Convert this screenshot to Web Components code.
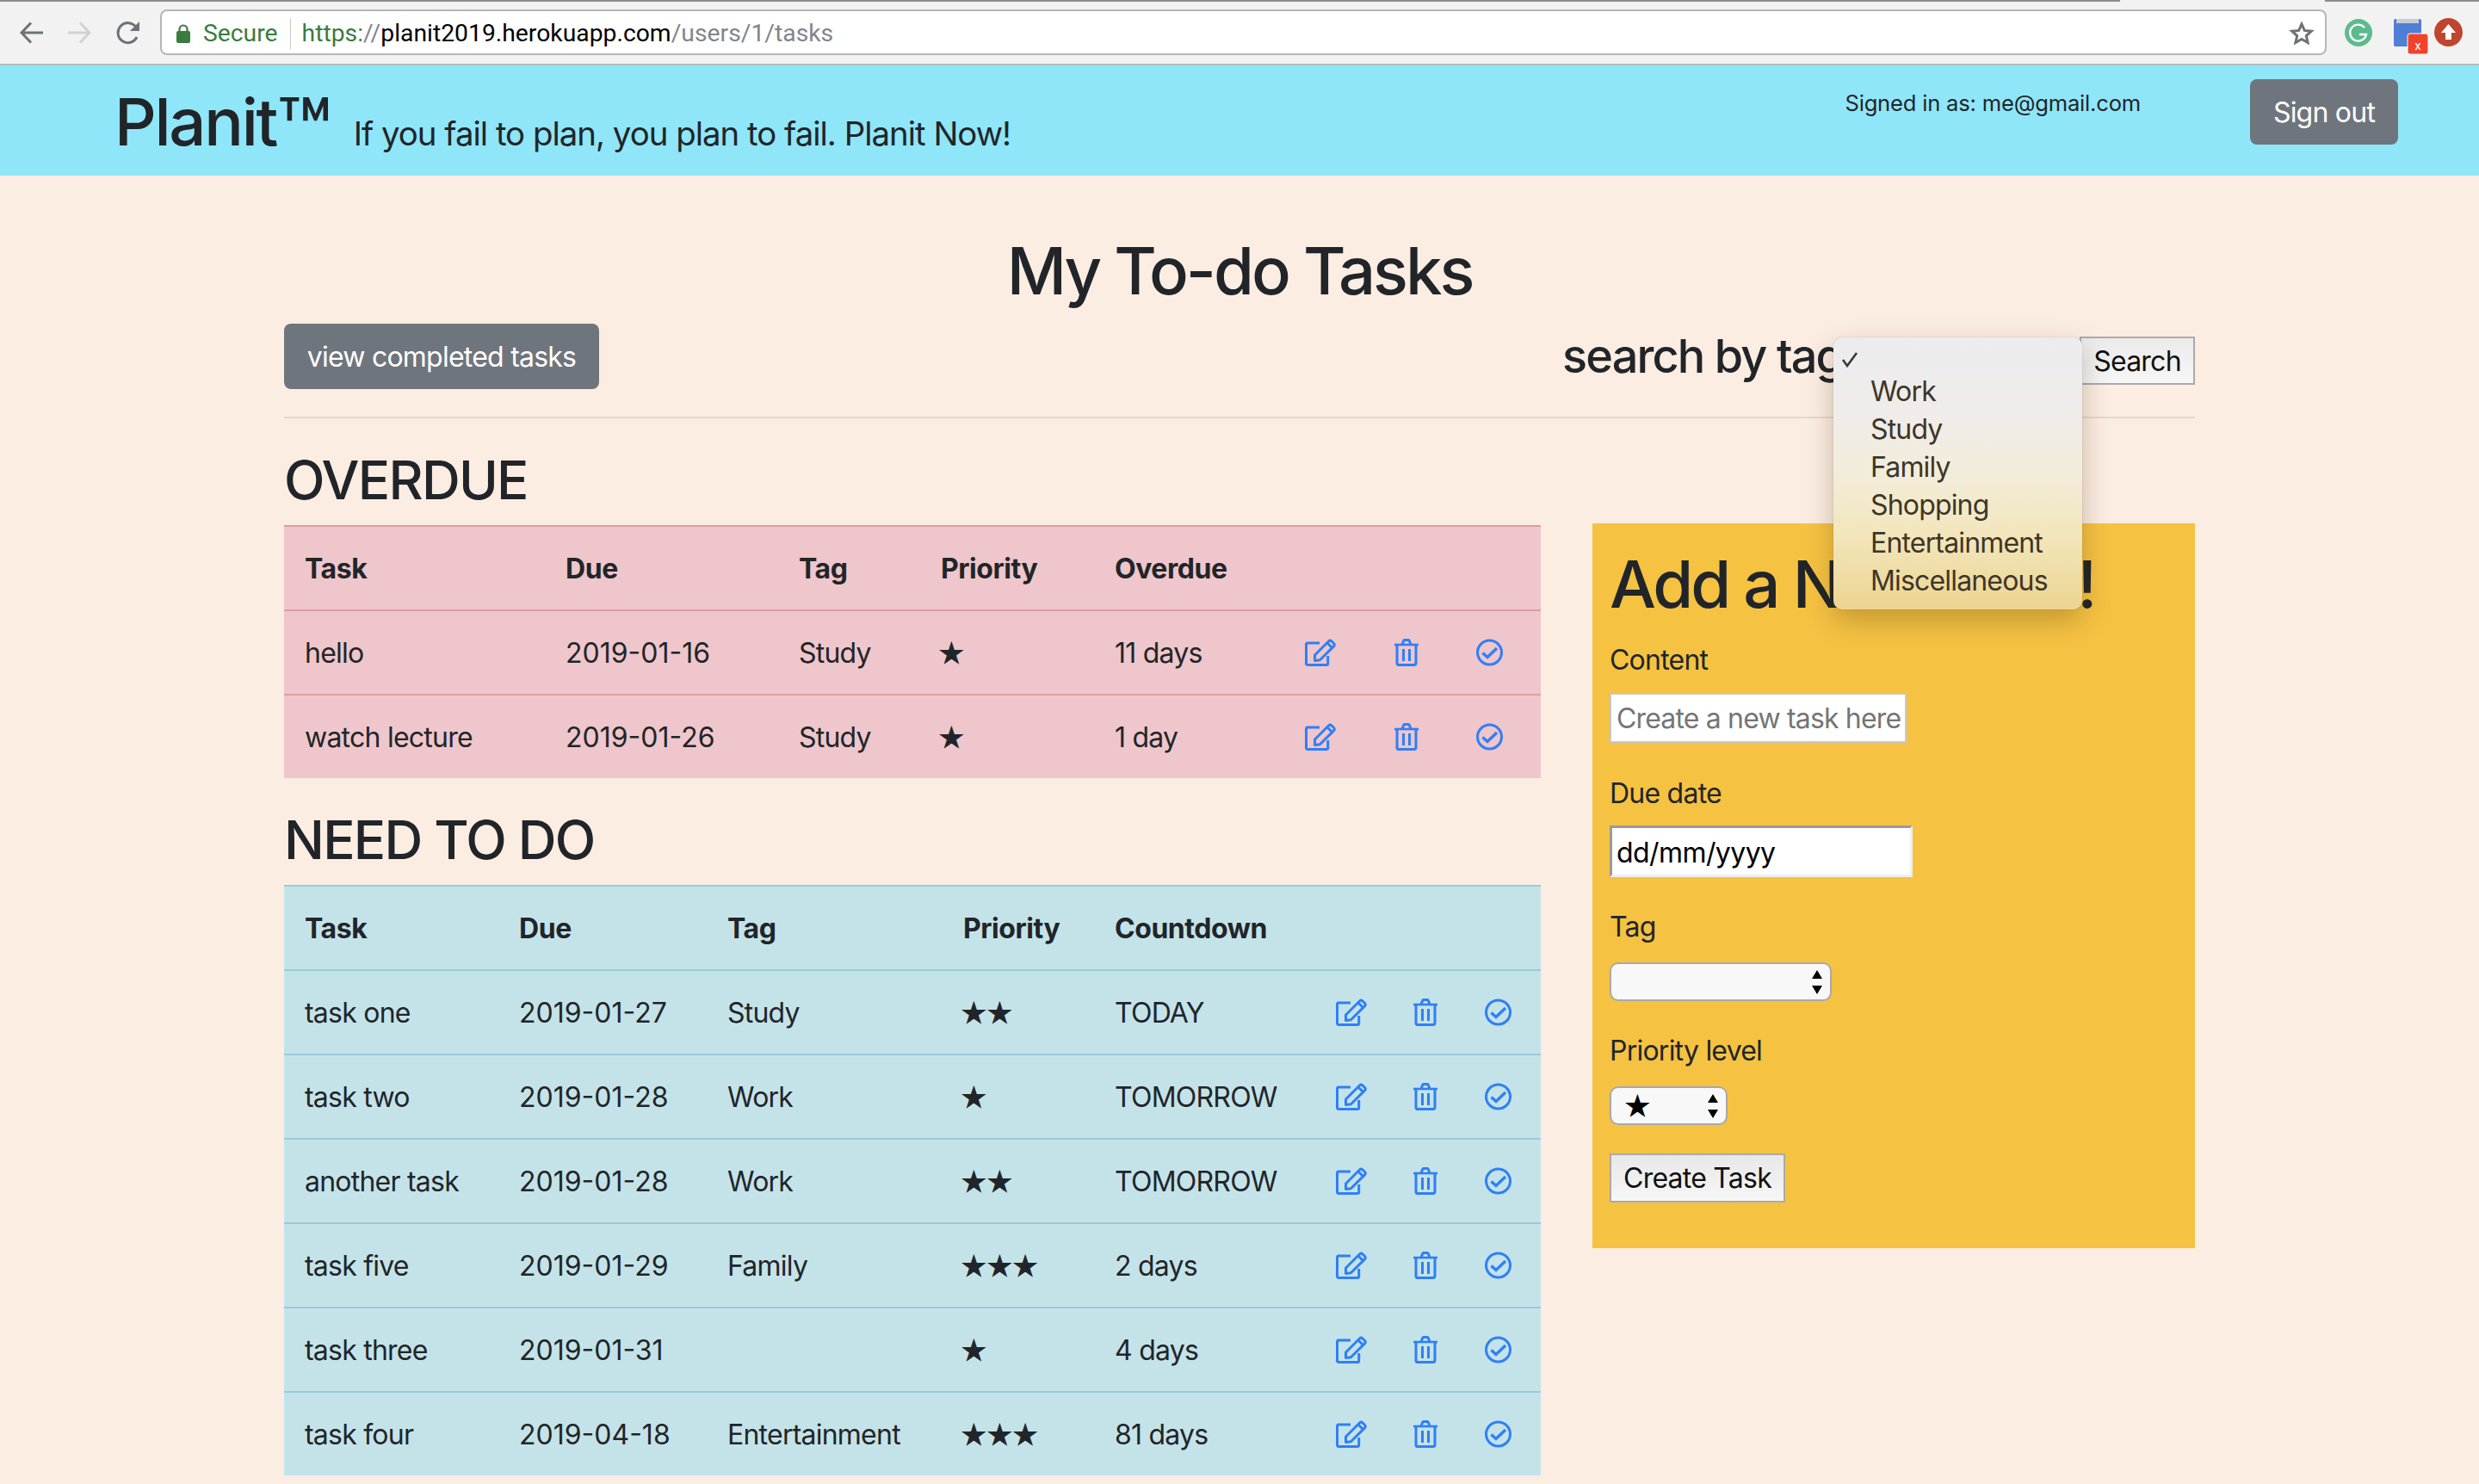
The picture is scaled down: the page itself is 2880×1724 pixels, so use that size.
<!DOCTYPE html>
<html lang="en">
<head>
<meta charset="utf-8">
<title>Planit</title>
<style>
    html, body { margin: 0; padding: 0; background: #fcede2; }
    body { font-family: Inter, "Liberation Sans", sans-serif; font-size: 32px; color: #212529; letter-spacing: -0.024em; }
</style>
</head>
<body>
<browser-bar url-host="planit2019.herokuapp.com" url-path="/users/1/tasks"></browser-bar>
<site-header></site-header>
<task-page>
    <task-toolbar slot="toolbar"></task-toolbar>
    <section-title>OVERDUE</section-title>
    <task-table style="--cols: 303px 271px 165px 202px 221px 104px 95px 99px; --row-bg: #efc6cb; --row-line: #e09ca3;">
        <task-row head task="Task" due="Due" tag="Tag" priority="Priority" left="Overdue"></task-row>
        <task-row task="hello" due="2019-01-16" tag="Study" stars="1" left="11 days"></task-row>
        <task-row task="watch lecture" due="2019-01-26" tag="Study" stars="1" left="1 day"></task-row>
    </task-table>
    <section-title>NEED TO DO</section-title>
    <task-table style="--cols: 249px 242px 274px 176px 257px 90px 83px 89px; --row-bg: #c4e3e9; --row-line: #98cbda;">
        <task-row head task="Task" due="Due" tag="Tag" priority="Priority" left="Countdown"></task-row>
        <task-row task="task one" due="2019-01-27" tag="Study" stars="2" left="TODAY"></task-row>
        <task-row task="task two" due="2019-01-28" tag="Work" stars="1" left="TOMORROW"></task-row>
        <task-row task="another task" due="2019-01-28" tag="Work" stars="2" left="TOMORROW"></task-row>
        <task-row task="task five" due="2019-01-29" tag="Family" stars="3" left="2 days"></task-row>
        <task-row task="task three" due="2019-01-31" tag="" stars="1" left="4 days"></task-row>
        <task-row task="task four" due="2019-04-18" tag="Entertainment" stars="3" left="81 days"></task-row>
    </task-table>
    <add-task-form slot="aside"></add-task-form>
</task-page>

<script>
class BrowserBar extends HTMLElement {
    constructor() {
        super();
        this.attachShadow({ mode: 'open' });
    }

    connectedCallback() {
        const host = this.getAttribute('url-host');
        const path = this.getAttribute('url-path');
        this.shadowRoot.innerHTML = `
            <style>
                :host { display: block; height: 76px; box-sizing: border-box; background: #f2f2f2; border-bottom: 2px solid #b4bcc0; font-family: Roboto, "Liberation Sans", sans-serif; letter-spacing: 0; }
                .tabs { display: flex; height: 2px; margin-bottom: 9px; }
                .tabs i { display: block; background: #8c8c8c; }
                .tabs i:first-child { width: 2463px; }
                .tabs i:last-child { margin-left: 238px; flex: 1; }
                .row { display: flex; align-items: center; height: 53px; padding-left: 23px; }
                .nav { display: block; flex: none; }
                .back { margin-right: 29px; }
                .forward { margin-right: 29px; }
                .reload { margin-right: 23px; }
                .address { display: flex; align-items: center; box-sizing: border-box; width: 2517px; height: 53px; padding-top: 2px; background: #fff; border: 2px solid #b6b6b6; border-radius: 8px; padding-left: 17px; font-size: 28.300px; white-space: nowrap; }
                .secure { color: #3a7c3f; margin-left: 15px; }
                .divider { width: 1px; height: 36px; background: #c4c4c4; margin: 0 13px 0 14px; }
                .scheme { color: #3a7c3f; }
                .slashes, .path { color: #80868b; }
                .hostname { color: #000; }
                .star { margin-left: auto; margin-right: 12px; }
                .g { margin-left: 21px; }
                .ext { position: relative; width: 32px; height: 32px; margin-left: 25px; }
                .ext .badge { position: absolute; left: 15px; top: 16px; }
                .up { margin-left: 15px; }
            </style>
            <div class="tabs"><i></i><i></i></div>
            <div class="row">
                <svg class="nav back" width="27" height="26" viewBox="0 0 27 26" fill="none" stroke="#6e7176" stroke-width="3"><path d="M27 13H3M13 1.5 2 13l11 11.500"/></svg>
                <svg class="nav forward" width="27" height="26" viewBox="0 0 27 26" fill="none" stroke="#d2d2d2" stroke-width="3"><path d="M0 13h24M14 1.500 25 13 14 24.500"/></svg>
                <svg class="nav reload" width="28" height="28" viewBox="0 0 28 28" fill="none"><path d="M24 19a11.500 11.500 0 1 1-1-11.500" stroke="#6e7176" stroke-width="3"/><path d="M27 1v11H16z" fill="#6e7176"/></svg>
                <div class="address">
                    <svg width="16" height="22" viewBox="0 0 16 22"><path d="M3.500 9V6a4.500 4.500 0 0 1 9 0v3" fill="none" stroke="#3a7c3f" stroke-width="2.200"/><rect y="8" width="16" height="14" rx="2" fill="#3a7c3f"/></svg>
                    <span class="secure">Secure</span>
                    <span class="divider"></span>
                    <span><span class="scheme">https:</span><span class="slashes">//</span><span class="hostname">${host}</span><span class="path">${path}</span></span>
                    <svg class="star" width="30" height="29" viewBox="0 0 30 29" fill="none" stroke="#6e7176" stroke-width="3"><path d="M15 4l3.300 7.400 8 .8-6 5.400 1.800 7.900L15 21.400l-7.100 4.100 1.800-7.900-6-5.400 8-.8z"/></svg>
                </div>
                <svg class="g" width="32" height="32" viewBox="0 0 32 32"><circle cx="16" cy="16" r="16" fill="#5cbb8c"/><path d="M23 10a9.500 9.500 0 1 0 2 8h-8" fill="none" stroke="#fff" stroke-width="2.400"/></svg>
                <div class="ext">
                    <svg width="32" height="32" viewBox="0 0 32 32"><rect width="32" height="32" rx="2" fill="#4f7fd6"/><rect x="3" width="26" height="5" fill="#c9ccd2"/></svg>
                    <svg class="badge" width="26" height="25" viewBox="0 0 26 25"><rect x="1" y="1" width="24" height="24" rx="3" fill="#f1432a" stroke="#fff" stroke-width="1"/><text x="13" y="20" text-anchor="middle" font-size="15" fill="#fff" font-family="Roboto, sans-serif">x</text></svg>
                </div>
                <svg class="up" width="33" height="33" viewBox="0 0 33 33"><circle cx="16.500" cy="16.500" r="16.500" fill="#c0452f"/><path d="M16.500 7l8.500 10h-5v8h-7v-8H8z" fill="#fff"/></svg>
            </div>
        `;
    }
}

class SiteHeader extends HTMLElement {
    constructor() {
        super();
        this.attachShadow({ mode: 'open' });
    }

    connectedCallback() {
        this.shadowRoot.innerHTML = `
            <style>
                :host { display: flex; align-items: flex-start; height: 128px; padding-left: 133px; background: #90e6f9; }
                .brand { display: flex; align-items: baseline; margin-top: 17px; }
                h1 { margin: 0; font-size: 76px; line-height: 96px; font-weight: 500; letter-spacing: -0.03em; }
                h1 span { font-size: 104px; line-height: 0; vertical-align: -20px; letter-spacing: 0; }
                h4 { margin: 0 0 0 25px; font-size: 38.400px; line-height: 48px; font-weight: 400; letter-spacing: -0.026em; white-space: nowrap; }
                .user { margin-left: auto; margin-top: 24px; font-size: 25.600px; line-height: 40px; letter-spacing: -0.008em; }
                button { margin: 16px 94px 0 127px; width: 172px; height: 76px; border: 0; border-radius: 8px; background: #6f757d; color: #fff; font: inherit; letter-spacing: inherit; padding: 0; }
            </style>
            <div class="brand"><h1>Planit<span>™</span></h1><h4>If you fail to plan, you plan to fail. Planit Now!</h4></div>
            <div class="user">Signed in as: me@gmail.com</div>
            <button type="button">Sign out</button>
        `;
    }
}

class TaskPage extends HTMLElement {
    constructor() {
        super();
        this.attachShadow({ mode: 'open' });
    }

    connectedCallback() {
        this.shadowRoot.innerHTML = `
            <style>
                :host { display: block; padding: 0 330px; height: 1520px; box-sizing: border-box; overflow: hidden; }
                .columns { display: grid; grid-template-columns: 1460px 700px; column-gap: 60px; border-top: 2px solid #e4d7cd; margin-top: 32px; padding-top: 31px; }
                aside { margin-top: 91px; }
            </style>
            <slot name="toolbar"></slot>
            <div class="columns">
                <main><slot></slot></main>
                <aside><slot name="aside"></slot></aside>
            </div>
        `;
    }
}

class TaskToolbar extends HTMLElement {
    constructor() {
        super();
        this.attachShadow({ mode: 'open' });
    }

    connectedCallback() {
        const tags = ['Work', 'Study', 'Family', 'Shopping', 'Entertainment', 'Miscellaneous'];
        this.shadowRoot.innerHTML = `
            <style>
                :host { display: block; }
                h1 { margin: 0 0 14px; padding-top: 62px; font-size: 76px; line-height: 96px; font-weight: 500; text-align: center; letter-spacing: -0.04em; }
                .row { display: flex; justify-content: space-between; align-items: flex-start; height: 76px; }
                .completed { width: 366px; height: 76px; padding: 0; border: 0; border-radius: 8px; background: #6f757d; color: #fff; font: inherit; letter-spacing: inherit; }
                .search { position: relative; display: flex; align-items: center; margin-top: 15px; height: 56px; }
                h3 { margin: -11px 275px 0 0; font-size: 54px; line-height: 56px; font-weight: 500; letter-spacing: -0.035em; }
                .go { width: 134px; height: 56px; padding: 0; box-sizing: border-box; border: 2px solid #aaa; background: linear-gradient(#ebebeb, #f6f6f6); color: #111; font: inherit; letter-spacing: inherit; }
                .menu { position: absolute; right: 131px; top: 1px; width: 289px; height: 316px; box-sizing: border-box; border-radius: 10px; background: linear-gradient(#ececee 0%, #f0ecea 28%, #f3ecd8 52%, #f3e6bc 72%, #ecd592 100%); box-shadow: 0 0 1px rgba(0,0,0,.45), 0 12px 32px rgba(60,40,10,.28); color: #3d3628; letter-spacing: -0.026em; padding-bottom: 12px; }
                .menu div { height: 44px; line-height: 46px; padding-left: 43px; white-space: nowrap; }
                .menu .current { position: relative; height: 40px; }
                .menu svg { position: absolute; left: 9px; top: 17px; }
            </style>
            <h1>My To-do Tasks</h1>
            <div class="row">
                <button class="completed" type="button">view completed tasks</button>
                <div class="search">
                    <h3>search by tag</h3>
                    <button class="go" type="button">Search</button>
                    <div class="menu">
                        <div class="current"><svg width="20" height="18" viewBox="0 0 20 18" fill="none" stroke="#3a3a3a" stroke-width="2.600"><path d="M2 9l5 7L18 1"/></svg></div>
                        ${tags.map(t => `<div>${t}</div>`).join('')}
                    </div>
                </div>
            </div>
        `;
    }
}

class SectionTitle extends HTMLElement {
    constructor() {
        super();
        this.attachShadow({ mode: 'open' });
    }

    connectedCallback() {
        this.shadowRoot.innerHTML = `
            <style>
                :host { display: block; padding-top: 2px; margin-bottom: 14px; font-size: 62px; line-height: 77px; font-weight: 500; letter-spacing: -0.028em; }
            </style>
            <slot></slot>
        `;
    }
}

class TaskTable extends HTMLElement {
    constructor() {
        super();
        this.attachShadow({ mode: 'open' });
    }

    connectedCallback() {
        this.shadowRoot.innerHTML = `
            <style>
                :host { display: block; margin-bottom: 31px; background: var(--row-bg); }
            </style>
            <slot></slot>
        `;
    }
}

class TaskIcon extends HTMLElement {
    constructor() {
        super();
        this.attachShadow({ mode: 'open' });
    }

    connectedCallback() {
        const icons = {
            edit: `<svg width="36" height="32" viewBox="0 0 36 32" fill="none" stroke="#2f7ff6" stroke-width="3" stroke-linejoin="round">
                <path d="M17 5H3a1.700 1.700 0 0 0-1.500 1.700v22.600A1.700 1.700 0 0 0 3 30.500h22a1.700 1.700 0 0 0 1.700-1.700V20"/>
                <path d="M11.500 19 27.500 3a2.600 2.600 0 0 1 3.600 0l2.300 2.300a2.600 2.600 0 0 1 0 3.600L17.400 24.800l-5.900.6z"/>
                <path d="M26 5l6 6"/></svg>`,
            trash: `<svg width="28" height="32" viewBox="0 0 28 32" fill="none" stroke="#2f7ff6" stroke-width="3" stroke-linejoin="round">
                <path d="M0 7h28" stroke-width="2.600"/>
                <path d="M9 7l1.500-4.200a2 2 0 0 1 1.800-1.400h3.400a2 2 0 0 1 1.800 1.400L19 7"/>
                <path d="M3 7v21.500A2.200 2.200 0 0 0 5.200 30.500h17.600a2.200 2.200 0 0 0 2.200-2.200V7"/>
                <path d="M10.500 12v14M17.500 12v14"/></svg>`,
            done: `<svg width="31" height="32" viewBox="0 0 31 32" fill="none" stroke="#2f7ff6">
                <circle cx="15.500" cy="16" r="14" stroke-width="3"/>
                <path d="M7.500 16.500l5.500 5L24 11" stroke-width="3.400"/></svg>`
        };
        this.shadowRoot.innerHTML = `
            <style>
                :host { display: block; height: 32px; line-height: 0; }
            </style>
            ${icons[this.getAttribute('name')]}
        `;
    }
}

class TaskRow extends HTMLElement {
    constructor() {
        super();
        this.attachShadow({ mode: 'open' });
    }

    connectedCallback() {
        const isHead = this.hasAttribute('head');
        const attr = name => this.getAttribute(name) || '';
        const priority = isHead
            ? attr('priority')
            : `<span class="stars">${'★'.repeat(Number(attr('stars')))}</span>`;
        const actions = isHead ? '<span></span><span></span><span></span>' : `
            <span class="action"><task-icon name="edit"></task-icon></span>
            <span class="action"><task-icon name="trash"></task-icon></span>
            <span class="action"><task-icon name="done"></task-icon></span>`;
        this.shadowRoot.innerHTML = `
            <style>
                :host { display: grid; grid-template-columns: var(--cols); align-items: center; height: 98px; box-sizing: border-box; border-top: 2px solid var(--row-line); white-space: nowrap; }
                :host([head]) { font-weight: 700; letter-spacing: -0.014em; }
                span { display: block; padding: 1px 0 0 24px; }
                .action { padding-top: 0; }
                .date { letter-spacing: 0; }
                .stars { display: inline; padding: 0; margin-left: -2px; font-family: "DejaVu Sans", sans-serif; font-size: 32px; letter-spacing: 1.200px; -webkit-text-stroke: 1.300px currentColor; }
            </style>
            <span>${attr('task')}</span>
            <span class="${isHead ? '' : 'date'}">${attr('due')}</span>
            <span>${attr('tag')}</span>
            <span>${priority}</span>
            <span>${attr('left')}</span>
            ${actions}
        `;
    }
}

class AddTaskForm extends HTMLElement {
    constructor() {
        super();
        this.attachShadow({ mode: 'open' });
    }

    connectedCallback() {
        const arrows = `<svg class="arrows" width="14" height="30" viewBox="0 0 14 30"><path d="M7 1l6 10H1zM7 29l6-10H1z" fill="#000"/></svg>`;
        this.shadowRoot.innerHTML = `
            <style>
                :host { display: block; box-sizing: border-box; height: 842px; padding: 22px 20px 0; background: #f5c242; }
                h1 { margin: 0 0 16px; font-size: 76px; line-height: 96px; font-weight: 500; letter-spacing: -0.04em; white-space: nowrap; }
                label { display: block; line-height: 48px; padding-top: 1px; margin-bottom: -1px; }
                .field { display: flex; align-items: center; box-sizing: border-box; }
                .text { width: 345px; height: 58px; margin: 15px 0 34px; padding-left: 6px; background: #fff; border: 2px solid #c8c8c8; color: #757575; white-space: nowrap; letter-spacing: -0.026em; }
                .date { width: 352px; height: 60px; margin: 14px 0 33px; padding: 2px 0 0 5px; background: #fff; border: 3px solid; border-color: #9a9a9a #eee #eee #9a9a9a; color: #000; letter-spacing: -0.018em; }
                .select { justify-content: space-between; height: 45px; margin: 18px 0 33px; padding: 0 8px 0 16px; background: #f8f8f8; border: 2px solid #a9a9a9; border-radius: 10px; color: #000; }
                .tag { width: 258px; }
                .priority { width: 137px; }
                .stars { font-family: "DejaVu Sans", sans-serif; font-size: 32px; letter-spacing: 0; -webkit-text-stroke: 1.300px currentColor; }
                button { display: block; width: 204px; height: 57px; padding: 0; box-sizing: border-box; border: 2px solid #aaa; background: linear-gradient(#e8e8e8, #f6f6f6); color: #111; font: inherit; letter-spacing: inherit; }
            </style>
            <h1>Add a New Task!</h1>
            <label>Content</label>
            <div class="field text">Create a new task here</div>
            <label>Due date</label>
            <div class="field date">dd/mm/yyyy</div>
            <label>Tag</label>
            <div class="field select tag"><span></span>${arrows}</div>
            <label>Priority level</label>
            <div class="field select priority"><span class="stars">★</span>${arrows}</div>
            <button type="button">Create Task</button>
        `;
    }
}

customElements.define('browser-bar', BrowserBar);
customElements.define('site-header', SiteHeader);
customElements.define('task-page', TaskPage);
customElements.define('task-toolbar', TaskToolbar);
customElements.define('section-title', SectionTitle);
customElements.define('task-table', TaskTable);
customElements.define('task-icon', TaskIcon);
customElements.define('task-row', TaskRow);
customElements.define('add-task-form', AddTaskForm);
</script>
</body>
</html>
